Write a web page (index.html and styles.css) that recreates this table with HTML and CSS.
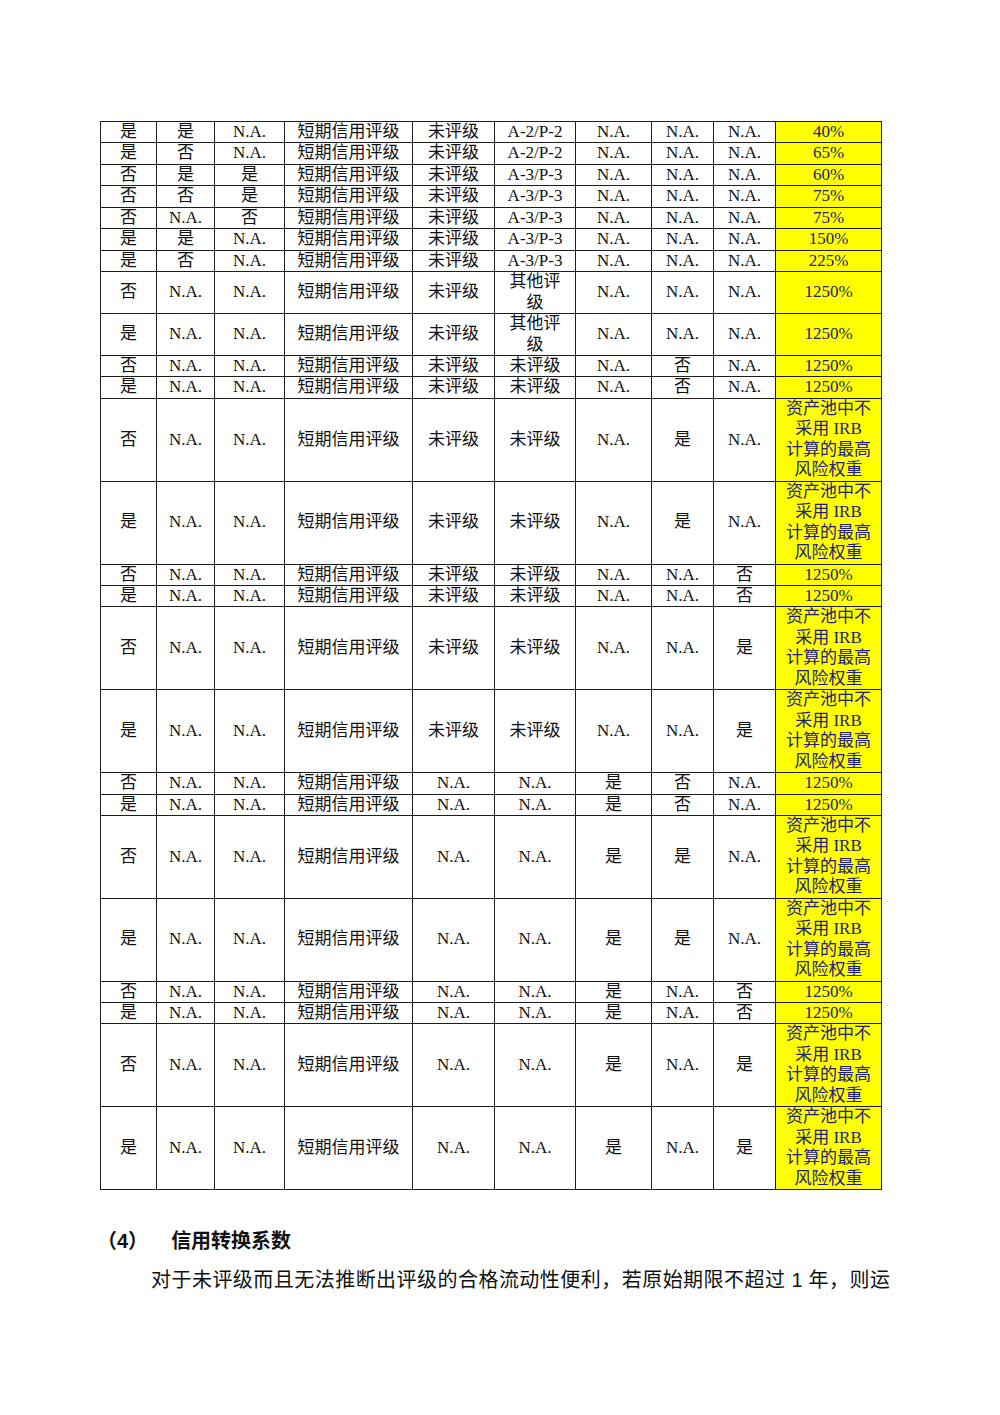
FILE: index.html
```html
<!DOCTYPE html>
<html lang="zh-CN">
<head>
<meta charset="utf-8">
<title>信用转换系数</title>
<link rel="stylesheet" href="styles.css">
</head>
<body>
<div class="page">
<table class="grid">
<colgroup>
<col class="c1"><col class="c2"><col class="c3"><col class="c4"><col class="c5"><col class="c6"><col class="c7"><col class="c8"><col class="c9"><col class="c10">
</colgroup>
<tbody>
<tr><td>是</td><td>是</td><td>N.A.</td><td>短期信用评级</td><td>未评级</td><td>A-2/P-2</td><td>N.A.</td><td>N.A.</td><td>N.A.</td><td class="rw">40%</td></tr>
<tr><td>是</td><td>否</td><td>N.A.</td><td>短期信用评级</td><td>未评级</td><td>A-2/P-2</td><td>N.A.</td><td>N.A.</td><td>N.A.</td><td class="rw">65%</td></tr>
<tr><td>否</td><td>是</td><td>是</td><td>短期信用评级</td><td>未评级</td><td>A-3/P-3</td><td>N.A.</td><td>N.A.</td><td>N.A.</td><td class="rw">60%</td></tr>
<tr><td>否</td><td>否</td><td>是</td><td>短期信用评级</td><td>未评级</td><td>A-3/P-3</td><td>N.A.</td><td>N.A.</td><td>N.A.</td><td class="rw">75%</td></tr>
<tr><td>否</td><td>N.A.</td><td>否</td><td>短期信用评级</td><td>未评级</td><td>A-3/P-3</td><td>N.A.</td><td>N.A.</td><td>N.A.</td><td class="rw">75%</td></tr>
<tr><td>是</td><td>是</td><td>N.A.</td><td>短期信用评级</td><td>未评级</td><td>A-3/P-3</td><td>N.A.</td><td>N.A.</td><td>N.A.</td><td class="rw">150%</td></tr>
<tr><td>是</td><td>否</td><td>N.A.</td><td>短期信用评级</td><td>未评级</td><td>A-3/P-3</td><td>N.A.</td><td>N.A.</td><td>N.A.</td><td class="rw">225%</td></tr>
<tr><td>否</td><td>N.A.</td><td>N.A.</td><td>短期信用评级</td><td>未评级</td><td>其他评<br>级</td><td>N.A.</td><td>N.A.</td><td>N.A.</td><td class="rw">1250%</td></tr>
<tr><td>是</td><td>N.A.</td><td>N.A.</td><td>短期信用评级</td><td>未评级</td><td>其他评<br>级</td><td>N.A.</td><td>N.A.</td><td>N.A.</td><td class="rw">1250%</td></tr>
<tr><td>否</td><td>N.A.</td><td>N.A.</td><td>短期信用评级</td><td>未评级</td><td>未评级</td><td>N.A.</td><td>否</td><td>N.A.</td><td class="rw">1250%</td></tr>
<tr><td>是</td><td>N.A.</td><td>N.A.</td><td>短期信用评级</td><td>未评级</td><td>未评级</td><td>N.A.</td><td>否</td><td>N.A.</td><td class="rw">1250%</td></tr>
<tr><td>否</td><td>N.A.</td><td>N.A.</td><td>短期信用评级</td><td>未评级</td><td>未评级</td><td>N.A.</td><td>是</td><td>N.A.</td><td class="rw">资产池中不<br>采用 IRB<br>计算的最高<br>风险权重</td></tr>
<tr><td>是</td><td>N.A.</td><td>N.A.</td><td>短期信用评级</td><td>未评级</td><td>未评级</td><td>N.A.</td><td>是</td><td>N.A.</td><td class="rw">资产池中不<br>采用 IRB<br>计算的最高<br>风险权重</td></tr>
<tr><td>否</td><td>N.A.</td><td>N.A.</td><td>短期信用评级</td><td>未评级</td><td>未评级</td><td>N.A.</td><td>N.A.</td><td>否</td><td class="rw">1250%</td></tr>
<tr><td>是</td><td>N.A.</td><td>N.A.</td><td>短期信用评级</td><td>未评级</td><td>未评级</td><td>N.A.</td><td>N.A.</td><td>否</td><td class="rw">1250%</td></tr>
<tr><td>否</td><td>N.A.</td><td>N.A.</td><td>短期信用评级</td><td>未评级</td><td>未评级</td><td>N.A.</td><td>N.A.</td><td>是</td><td class="rw">资产池中不<br>采用 IRB<br>计算的最高<br>风险权重</td></tr>
<tr><td>是</td><td>N.A.</td><td>N.A.</td><td>短期信用评级</td><td>未评级</td><td>未评级</td><td>N.A.</td><td>N.A.</td><td>是</td><td class="rw">资产池中不<br>采用 IRB<br>计算的最高<br>风险权重</td></tr>
<tr><td>否</td><td>N.A.</td><td>N.A.</td><td>短期信用评级</td><td>N.A.</td><td>N.A.</td><td>是</td><td>否</td><td>N.A.</td><td class="rw">1250%</td></tr>
<tr><td>是</td><td>N.A.</td><td>N.A.</td><td>短期信用评级</td><td>N.A.</td><td>N.A.</td><td>是</td><td>否</td><td>N.A.</td><td class="rw">1250%</td></tr>
<tr><td>否</td><td>N.A.</td><td>N.A.</td><td>短期信用评级</td><td>N.A.</td><td>N.A.</td><td>是</td><td>是</td><td>N.A.</td><td class="rw">资产池中不<br>采用 IRB<br>计算的最高<br>风险权重</td></tr>
<tr><td>是</td><td>N.A.</td><td>N.A.</td><td>短期信用评级</td><td>N.A.</td><td>N.A.</td><td>是</td><td>是</td><td>N.A.</td><td class="rw">资产池中不<br>采用 IRB<br>计算的最高<br>风险权重</td></tr>
<tr><td>否</td><td>N.A.</td><td>N.A.</td><td>短期信用评级</td><td>N.A.</td><td>N.A.</td><td>是</td><td>N.A.</td><td>否</td><td class="rw">1250%</td></tr>
<tr><td>是</td><td>N.A.</td><td>N.A.</td><td>短期信用评级</td><td>N.A.</td><td>N.A.</td><td>是</td><td>N.A.</td><td>否</td><td class="rw">1250%</td></tr>
<tr><td>否</td><td>N.A.</td><td>N.A.</td><td>短期信用评级</td><td>N.A.</td><td>N.A.</td><td>是</td><td>N.A.</td><td>是</td><td class="rw">资产池中不<br>采用 IRB<br>计算的最高<br>风险权重</td></tr>
<tr><td>是</td><td>N.A.</td><td>N.A.</td><td>短期信用评级</td><td>N.A.</td><td>N.A.</td><td>是</td><td>N.A.</td><td>是</td><td class="rw">资产池中不<br>采用 IRB<br>计算的最高<br>风险权重</td></tr>
</tbody>
</table>
<h3 class="heading"><span class="num">（4）</span>信用转换系数</h3>
<p class="body-text">对于未评级而且无法推断出评级的合格流动性便利，若原始期限不超过 1 年，则运</p>
</div>
</body>
</html>
```
FILE: styles.css
```css
html, body {
  margin: 0;
  padding: 0;
  background: #ffffff;
}

.page {
  padding: 121px 0 0 100px;
}

.grid {
  border-collapse: collapse;
  table-layout: fixed;
  width: 781px;
  font-family: "Liberation Serif", "Noto Sans CJK SC", serif;
  font-size: 17px;
  color: #111111;
}

.c1 { width: 56px; }
.c2 { width: 58px; }
.c3 { width: 70px; }
.c4 { width: 128px; }
.c5 { width: 82px; }
.c6 { width: 81px; }
.c7 { width: 76px; }
.c8 { width: 62px; }
.c9 { width: 62px; }
.c10 { width: 106px; }

.grid td {
  border: 1px solid #1e1e1e;
  padding: 0 2px;
  line-height: 20.45px;
  height: 20.45px;
  text-align: center;
  vertical-align: middle;
  white-space: nowrap;
}

.grid td.rw {
  background: #ffff00;
  color: #22227a;
}

.heading {
  margin: 37px 0 0 -3px;
  font-family: "Liberation Sans", "Noto Sans CJK SC", sans-serif;
  font-size: 20px;
  font-weight: bold;
  line-height: 28px;
  color: #111111;
}

.heading .num {
  margin-right: 23px;
}

.body-text {
  margin: 10px 0 0 51px;
  width: 739px;
  font-family: "Liberation Sans", "Noto Sans CJK SC", sans-serif;
  font-size: 20px;
  line-height: 30px;
  color: #111111;
  text-align: justify;
  text-align-last: justify;
}
```
